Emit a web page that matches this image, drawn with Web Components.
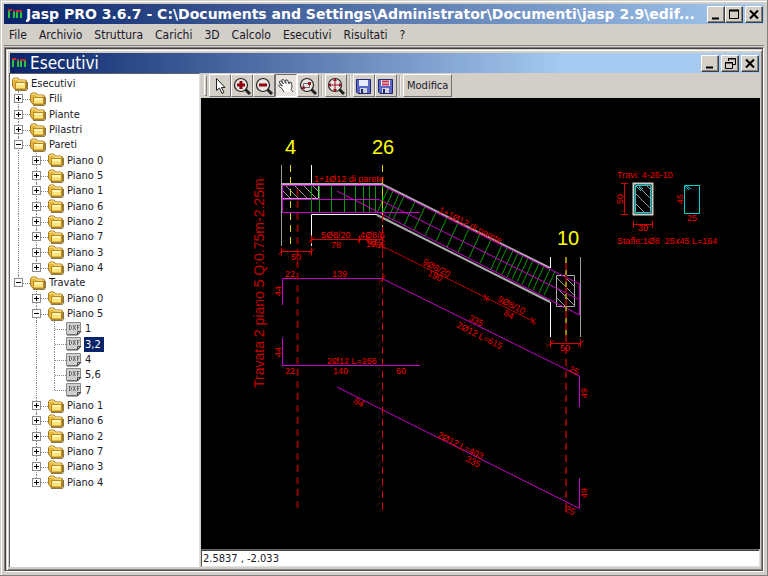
<!DOCTYPE html>
<html lang="it">
<head>
<meta charset="utf-8">
<title>Jasp PRO 3.6.7</title>
<style>
  html, body { margin: 0; height: 100%; overflow: hidden; }
  body { font: 12px "DejaVu Sans Condensed", "DejaVu Sans", sans-serif; color: #201828; background: #d1cfc7; }
</style>
</head>
<body>
<app-window></app-window>
<script>
function define(name, html, setup) {
  const template = document.createElement('template');
  template.innerHTML = html;
  customElements.define(name, class extends HTMLElement {
    constructor() {
      super();
      this.attachShadow({ mode: 'open' }).append(template.content.cloneNode(true));
    }
    connectedCallback() { if (setup) setup(this, this.shadowRoot); }
  });
}

define('app-logo', `
<style>:host{display:block;flex:none;width:14px;height:12px} svg{display:block}</style>
<svg width="14" height="12" viewBox="0 0 14 12" fill="none" stroke-width="2">
  <path d="M1 2V10M6 4V10M9 4V10M13 2V10" stroke="#25c43c"/>
  <path d="M0 2H4M5 3H7M8 3H14" stroke="#c02c30"/>
  <path d="M6 4V8" stroke="#25c43c"/>
</svg>`);

const controlIcons = {
  min: '<path d="M3 10.5H10" stroke-width="2"/>',
  max: '<path d="M2.500 3V10.500H11.500V3"/><path d="M2 2.500H12" stroke-width="2"/>',
  restore: '<path d="M5.500 4V1.500H12.500V7.500H10M5 2H13"/><path d="M2.500 5.500H9.500V11.500H2.500ZM2 6H10"/>',
  close: '<path d="M3 2.500L11 10.500M11 2.500L3 10.500" stroke-width="2"/>'
};
define('window-control', `
<style>
  :host{display:block;flex:none}
  button{display:flex;align-items:center;justify-content:center;box-sizing:border-box;width:18px;height:17px;padding:0;background:#d4d0c8;border:1px solid;border-color:#fff #404040 #404040 #fff;box-shadow:inset -1px -1px #808080}
  svg{display:block;flex:none}
</style>
<button type="button"><svg width="14" height="13" viewBox="0 0 14 13" fill="none" stroke="#000"></svg></button>`,
(el, root) => {
  root.querySelector('button').setAttribute('aria-label', el.getAttribute('label'));
  root.querySelector('svg').innerHTML = controlIcons[el.getAttribute('kind')];
});

define('title-bar', `
<style>
  :host{display:flex;align-items:center;height:20px;padding:0 1px 0 2px;gap:4px;color:#fff;font-size:17px;background:linear-gradient(90deg,#0a246a,#a6caf0 var(--fade-end,100%))}
  .text{flex:1;min-width:0;white-space:nowrap;overflow:hidden;line-height:20px}
  .controls{display:flex;gap:2px}
</style>
<app-logo></app-logo><div class="text"><slot></slot></div><div class="controls"><slot name="controls"></slot></div>`);

define('menu-bar', `
<style>
  :host{display:block;border-bottom:1px solid #808080}
  nav{display:flex;gap:12px;padding:0 5px;height:21px;align-items:center}
  button{font:inherit;color:inherit;background:none;border:0;padding:0;line-height:16px;white-space:nowrap}
</style>
<nav aria-label="Menu"></nav>`,
(el, root) => {
  root.querySelector('nav').innerHTML = ['File', 'Archivio', 'Struttura', 'Carichi', '3D', 'Calcolo', 'Esecutivi', 'Risultati', '?']
    .map(t => `<button type="button">${t}</button>`).join('');
});

const folderIcon = `<svg width="16" height="14" viewBox="0 0 16 14">
  <path d="M3 13.500H14.500L15.500 12V5" fill="none" stroke="#887850" stroke-width="1"/>
  <path d="M.5 2.500L2 1H6L7.500 3H13.500L14.500 4V12L13.500 12.500H3L.5 9Z" fill="#e7b63c" stroke="#a87c20"/>
  <path d="M1.500 3L2.500 2H5.500L7 4H13" fill="none" stroke="#fff0a0"/>
  <path d="M3.500 5.500H13.500V12H3.500Z" fill="#ffe27a" stroke="#b98a20"/>
  <path d="M4.500 7H12.500" stroke="#fff7bb" stroke-width="2"/>
</svg>`;
const dxfIcon = `<svg width="16" height="14" viewBox="0 0 16 14">
  <path d="M.5 .5H14.500V9.500L11.500 12.500H.5Z" fill="#d0d0d0" stroke="#8a8a8a"/>
  <path d="M1 13H11.500L15 9.500" fill="none" stroke="#505050"/>
  <path d="M11.500 12.500V9.500H14.500Z" fill="#eee" stroke="#444"/>
  <path d="M3.500 3V8M3 3.500H4.500L5.500 4.500V6.500L4.500 7.500H3M7 3L9.500 8M9.500 3L7 8M11.500 3V8M11 3.500H13.500M11 5.500H13" fill="none" stroke="#555" stroke-width=".8"/>
</svg>`;

define('tree-row', `
<style>
  :host{display:flex;align-items:center;min-height:0}
  .cells{display:flex;align-self:stretch;flex:none}
  .cell{position:relative;flex:none;width:18px;display:flex;align-items:center}
  .v::before{content:"";position:absolute;left:6px;top:0;bottom:0;border-left:1px dotted #888}
  .end::before{bottom:50%}
  .h::after{content:"";position:absolute;left:7px;right:0;top:50%;border-top:1px dotted #888}
  button{position:relative;z-index:1;flex:none;box-sizing:border-box;width:9px;height:9px;margin-left:2px;padding:0;background:#fff;border:1px solid #8c8c8c;display:block}
  svg{display:block;flex:none}
  .icon{width:16px;margin-right:2px}
  .label{padding:0 3px 0 1px;line-height:15px;white-space:nowrap}
  :host([selected]) .label{background:#0a246a;color:#fff}
</style>
<span class="cells"></span><span class="icon"></span><span class="label"><slot></slot></span>`,
(el, root) => {
  const guides = el.getAttribute('guides') || '';
  root.querySelector('.cells').innerHTML = [...guides].map(g => {
    if (g === '|') return '<span class="cell v"></span>';
    if (g === ' ') return '<span class="cell"></span>';
    if (g === 't') return '<span class="cell v h"></span>';
    if (g === 'l') return '<span class="cell v end h"></span>';
    const open = g === '-' || g === '_', last = g === '_' || g === '*';
    return `<span class="cell v h${last ? ' end' : ''}"><button type="button" aria-expanded="${open}" aria-label="${open ? 'Comprimi' : 'Espandi'}"><svg width="7" height="7" viewBox="0 0 7 7" stroke="#000"><path d="M1 3.500H6${open ? '' : 'M3.500 1V6'}"/></svg></button></span>`;
  }).join('');
  root.querySelector('.icon').innerHTML = el.hasAttribute('leaf') ? dxfIcon : folderIcon;
  el.setAttribute('role', 'treeitem');
  el.setAttribute('aria-level', guides.length + 1);
});

const planes = [0, 5, 1, 6, 2, 7, 3, 4];
const row = (g, t, extra = '') => `<tree-row guides="${g}" ${extra}>${t}</tree-row>`;
define('tree-view', `
<style>
  :host{display:block;box-sizing:border-box;width:190px;flex:none;background:#fff;border-top:1px solid #606060;padding:2px 0 0 2px;font-size:11px;overflow:hidden;border-right:1px solid #e0ded8}
  .rows{display:grid;grid-auto-rows:1fr;height:414px}
</style>
<div class="rows" role="tree" aria-label="Esecutivi">
${row('', 'Esecutivi')}${row('+', 'Fili')}${row('+', 'Piante')}${row('+', 'Pilastri')}${row('-', 'Pareti')}
${planes.map((n, i) => row('|' + (i === 7 ? '*' : '+'), 'Piano ' + n)).join('')}
${row('_', 'Travate')}${row(' +', 'Piano 0')}${row(' -', 'Piano 5')}
${['1', '3,2', '4', '5,6', '7'].map((t, i) => row(' |' + (i === 4 ? 'l' : 't'), t, 'leaf' + (i === 1 ? ' selected' : ''))).join('')}
${[1, 6, 2, 7, 3, 4].map((n, i) => row(' ' + (i === 5 ? '*' : '+'), 'Piano ' + n)).join('')}
</div>`);

const lens = '<path d="M12 12L17 17" stroke="#222" stroke-width="3"/><circle cx="8" cy="8" r="6.500" fill="#e8e6e2" stroke="#222" stroke-width="1.200"/>';
const disk = '<path d="M1.500 2.500H15.500V16.500H3L1.500 15Z" fill="#5b68c8" stroke="#23286c"/><path d="M4 3H13V9H4Z" fill="#e8ecff"/><path d="M5 11H12V16H5Z" fill="#cfd2dc"/><path d="M6 12H8V16H6Z" fill="#23286c"/>';
const toolIcons = {
  arrow: '<path d="M5.500 1.500V13.500L8.500 11L11 16.500L13 15.500L10.500 10.500H14Z" fill="#fff" stroke="#222"/>',
  zoomin: lens + '<path d="M4 8H12M8 4V12" stroke="#900010" stroke-width="3"/>',
  zoomout: lens + '<path d="M4 8H12" stroke="#900010" stroke-width="3"/>',
  hand: '<path d="M7 15L5 11.500L1.500 9L2.500 7.500L5.500 9L2 5L3.500 4L6.500 7L4.500 3L6.500 2.500L9 6.500L8.500 3L10.500 3L12 7L12.500 5L14.500 5.500L15 10L14 12.500L16 15" fill="#fff" stroke="#444"/>',
  zoomwin: lens + '<path d="M4.500 6.500H10.500V10.500H4.500Z" fill="none" stroke="#666"/><path d="M3 9.500H6V12H3ZM9 5H12V8H9Z" fill="#a01020"/>',
  zoomall: lens + '<path d="M3 8H13M8 3V13" stroke="#a01020"/><path d="M8 1L10 4H6ZM8 15L10 12H6ZM1 8L4 6V10ZM15 8L12 6V10Z" fill="#a01020"/>',
  save: disk,
  saveas: disk + '<path d="M5 4.500H12M5 7.500H12" stroke="#d03048" stroke-width="2"/>'
};
define('tool-button', `
<style>
  :host{display:block;flex:none}
  button{display:flex;align-items:center;justify-content:center;box-sizing:border-box;min-width:22px;height:23px;padding:0 1px;font:inherit;color:inherit;background:#d4d0c8;border:1px solid;border-color:#fff #707070 #707070 #fff}
  :host([pressed]) button{background:#e9e4e2;border-color:#707070 #fff #fff #707070}
  :host(:not([kind])) button{padding:0 3px}
  svg{display:block}
</style>
<button type="button"><slot></slot></button>`,
(el, root) => {
  const b = root.querySelector('button'), kind = el.getAttribute('kind');
  if (kind) {
    b.setAttribute('aria-label', el.getAttribute('label'));
    b.innerHTML = `<svg width="18" height="18" viewBox="0 0 18 18">${toolIcons[kind]}</svg>`;
  }
  if (el.hasAttribute('pressed')) b.setAttribute('aria-pressed', 'true');
});

define('tool-bar', `
<style>
  :host{display:flex;align-items:center;height:25px;padding-left:3px;font-size:11px}
  .grip{width:1px;height:19px;border:1px solid;border-color:#fff #808080 #808080 #fff;margin-right:2px}
  .sep{width:1px;height:21px;background:#b0aea8;border-right:1px solid #eee;margin:0 2px}
</style>
<span class="grip"></span>
<tool-button kind="arrow" label="Seleziona"></tool-button><tool-button kind="zoomin" label="Zoom avanti"></tool-button><tool-button kind="zoomout" label="Zoom indietro"></tool-button><tool-button kind="hand" label="Sposta" pressed></tool-button><tool-button kind="zoomwin" label="Zoom finestra"></tool-button>
<span class="sep"></span><tool-button kind="zoomall" label="Zoom tutto"></tool-button>
<span class="sep"></span><tool-button kind="save" label="Salva"></tool-button><tool-button kind="saveas" label="Salva tutto"></tool-button>
<span class="sep"></span><tool-button>Modifica</tool-button>`);

/* Stirrups: each runs square to the sloping beam, given by the x of its top end. */
const stirrups = [404, 415, 425, 436, 447, 458, 469, 480, 491, 502, 507, 513, 518, 523, 528, 533, 539, 544, 550, 555]
  .map(x => `M${x} ${185 + (x - 382) / 2}l-11 24`).join('');
const text = (x, y, t, angle = 0) => `<text transform="translate(${x} ${y}) rotate(${angle})">${t}</text>`;
const tick = (x, y) => `M${x} ${y - 4}v8M${x - 3} ${y + 3}l6-6`;
const star = (x, y) => `M${x - 3} ${y + 2}l6-4M${x - 1} ${y - 4}l2 8M${x - 2} ${y - 3}l5 6`;

define('cad-view', `
<style>
  :host{display:block;flex:1;min-height:0;background:#000;overflow:hidden}
  svg{display:block;width:100%;height:100%}
  g{fill:none;stroke-width:1}
  text{stroke:none;fill:#f00000;font:9px "Liberation Sans",Arial,sans-serif;white-space:pre}
  .axis text{fill:#ff0;font-size:20px}
  .name text{font-size:14px;fill:#c80000}
</style>
<svg viewBox="201 98 559 451" preserveAspectRatio="xMinYMin meet" role="img" aria-label="Travata 2 piano 5">
  <g stroke="#999"><path d="M281.500 165V246M580.500 257V337"/>
    <path d="M281 184H382L550 268M377 215L550 302" stroke="#aaa" stroke-width="2"/>
    <path d="M311.500 165V184M311.500 246V214.500H377M550.500 257V268M550.500 302V337" stroke="#fff"/>
    <path d="M281.500 184.500H318.500V198.500H281.500ZM556.500 275.500H574.500V306.500H556.500Z" stroke="#aaa"/>
    <path d="M282 190l8 8M285 185l13 13M294 185l13 13M303 185l13 13M312 185l6 6M557 298l8 8M557 288l17 17M557 278l17 17M564 276l10 10"/>
  </g>
  <g stroke="#009c00"><path d="M311.500 185V213M319.500 185V213M331.500 185V213M344.500 185V213M355.500 185V213M363.500 185V213M369.500 185V213M375.500 185V213M388 189L378 211M393 191L383 213M399 194L388 219${stirrups}"/><path d="M382.500 185V216" stroke="#0f0"/></g>
  <g stroke="#c800c8">
    <path d="M420 212.500H282.500V185.500H382L579.500 284V315L337 191M282 199.500H379L578 299"/>
    <path d="M282.500 305V278.500H382L579.500 376V407M282.500 338V365.500H420M337 387L579.500 508.500V478"/>
  </g>
  <g stroke="#e0d800" stroke-dasharray="7 5"><path d="M290.500 165V245M382.500 165V245"/><path d="M566 257V336" stroke="#938a00" stroke-width="2"/></g>
  <g stroke="#c00000" stroke-dasharray="7 5"><path d="M297.500 189V512M566 263V512" stroke="#8c0000" stroke-width="2"/><path d="M382.500 215V512" stroke="#e00000"/></g>
  <g stroke="#d80000">
    <path d="M311 239.500H382${tick(311.5, 239.5)}${tick(359.5, 239.5)}${star(382, 239)}${star(382, 246)}"/>
    <path d="M281 251.500H311${tick(281.5, 251.5)}${tick(311.5, 251.5)}M550 343.500H580${tick(550.5, 343.5)}${tick(580.5, 343.5)}"/>
    <path d="M382 246L533 321${star(486, 298)}${star(533, 321)}M379 283l7-8M383 278v-5" stroke="#b80000"/>
    <path d="M624.500 183.500V214.500M621 183.500h7M621 214.500h7M633 224.500H652M633.500 221v7M652.500 221v7"/>
  </g>
  <g stroke="#ccc"><path d="M633.500 183.500H652.500V214.500H633.500Z" stroke-width="2"/><path d="M636 204l8 8M636 194l15 15M639 187l12 12M645 184l6 6" stroke="#999"/></g>
  <g stroke="#00d0d0"><path d="M635.500 185.500H650.500V212.500H635.500ZM684.500 185.500H699.500V213.500H684.500ZM636 186l5 5M638 185l5 4M685 186l4 4M687 186l4 3"/></g>
  <g class="axis">${text(285, 154, '4')}${text(372, 154, '26')}${text(557, 245, '10')}</g>
  <g class="name">${text(264, 388, 'Travata 2 piano 5 Q:0.75m-2.25m', -90)}</g>
  <g>
    ${text(314, 182, '1+1Ø12 di parete')}${text(438, 212, '1+1Ø12 di parete', 27)}
    ${text(321, 238, '5Ø8/20')}${text(331, 248, '78')}${text(360, 238, '4Ø8/5')}${text(364, 241, '4Ø8', 27)}${text(366, 247, '19')}${text(291, 260, '50')}
    ${text(422, 264, '9Ø8/20', 27)}${text(427, 275, '190', 27)}${text(497, 301, '9Ø8/10', 27)}${text(503, 315, '84', 27)}
    ${text(468, 320, '335', 27)}${text(456, 327, '2Ø12 L=615', 27)}
    ${text(285, 277, '22')}${text(332, 277, '139')}${text(281, 296, '44', -90)}${text(281, 357, '44', -90)}
    ${text(327, 364, '2Ø12 L=266')}${text(285, 374, '22')}${text(333, 374, '140')}${text(396, 374, '60')}
    ${text(353, 403, '84', 27)}${text(437, 437, '2Ø12 L=403', 27)}${text(465, 461, '335', 27)}
    ${text(568, 371, '25', 27)}${text(587, 398, '49', -90)}${text(587, 498, '49', -90)}${text(564, 511, '25', 27)}${text(560, 351, '50')}
    ${text(617, 178, 'Travi: 4-26-10')}${text(623, 204, '50', -90)}${text(638, 231, '30')}
    ${text(683, 204, '45', -90)}${text(687, 221, '25')}${text(617, 244, 'Staffe:1Ø8  25x45 L=164')}
  </g>
</svg>`);

define('status-bar', `
<style>
  :host{display:block}
  input{display:block;box-sizing:border-box;width:100%;height:18px;margin:0;padding:0 1px;font:inherit;font-size:11px;color:inherit;background:#fff;border:1px solid;border-color:#707070 #e0e0e0 #e0e0e0 #505050;box-shadow:inset 0 1px #404040;border-radius:0;outline:0}
</style>
<input type="text" readonly aria-label="Coordinate" value="2.5837 , -2.033">`);

define('app-window', `
<style>
  :host{display:flex;flex-direction:column;box-sizing:border-box;height:100vh;padding:4px;background:#d1cfc7;box-shadow:inset -1px -1px #808080,inset 1px 1px #d4d0c8,inset 2px 2px #fff}
  .main{font-family:"DejaVu Sans",sans-serif;font-weight:bold;font-size:14px;padding-left:4px}
  .inner{--fade-end:74%}
  .pair{display:flex}
  .mdi{flex:1;min-height:0;display:flex;margin-top:1px;border:1px solid;border-color:#808080 #fff #fff #808080;box-shadow:inset 1px 1px #404040,inset -1px -1px #555;padding:1px}
  .child{flex:1;min-width:0;display:flex;flex-direction:column;padding:4px 2px 3px 4px;box-shadow:inset 1px 1px #d4d0c8,inset 2px 2px #fff,inset -1px -1px #808080}
  .body{flex:1;min-height:0;display:flex;box-shadow:-1px 0 #606060}
  .work{flex:1;min-width:0;display:flex;flex-direction:column;margin-left:1px}
</style>
<title-bar class="main">Jasp PRO 3.6.7 - C:\\Documents and Settings\\Administrator\\Documenti\\jasp 2.9\\edif...
  <div class="pair" slot="controls"><window-control kind="min" label="Riduci a icona"></window-control><window-control kind="max" label="Ingrandisci"></window-control></div>
  <window-control slot="controls" kind="close" label="Chiudi"></window-control>
</title-bar>
<menu-bar></menu-bar>
<div class="mdi"><section class="child" aria-label="Esecutivi">
  <title-bar class="inner">Esecutivi
    <window-control slot="controls" kind="min" label="Riduci a icona"></window-control>
    <window-control slot="controls" kind="restore" label="Ripristina"></window-control>
    <window-control slot="controls" kind="close" label="Chiudi"></window-control>
  </title-bar>
  <div class="body"><tree-view></tree-view><div class="work"><tool-bar></tool-bar><cad-view></cad-view><status-bar></status-bar></div></div>
</section></div>`);
</script>
</body>
</html>
